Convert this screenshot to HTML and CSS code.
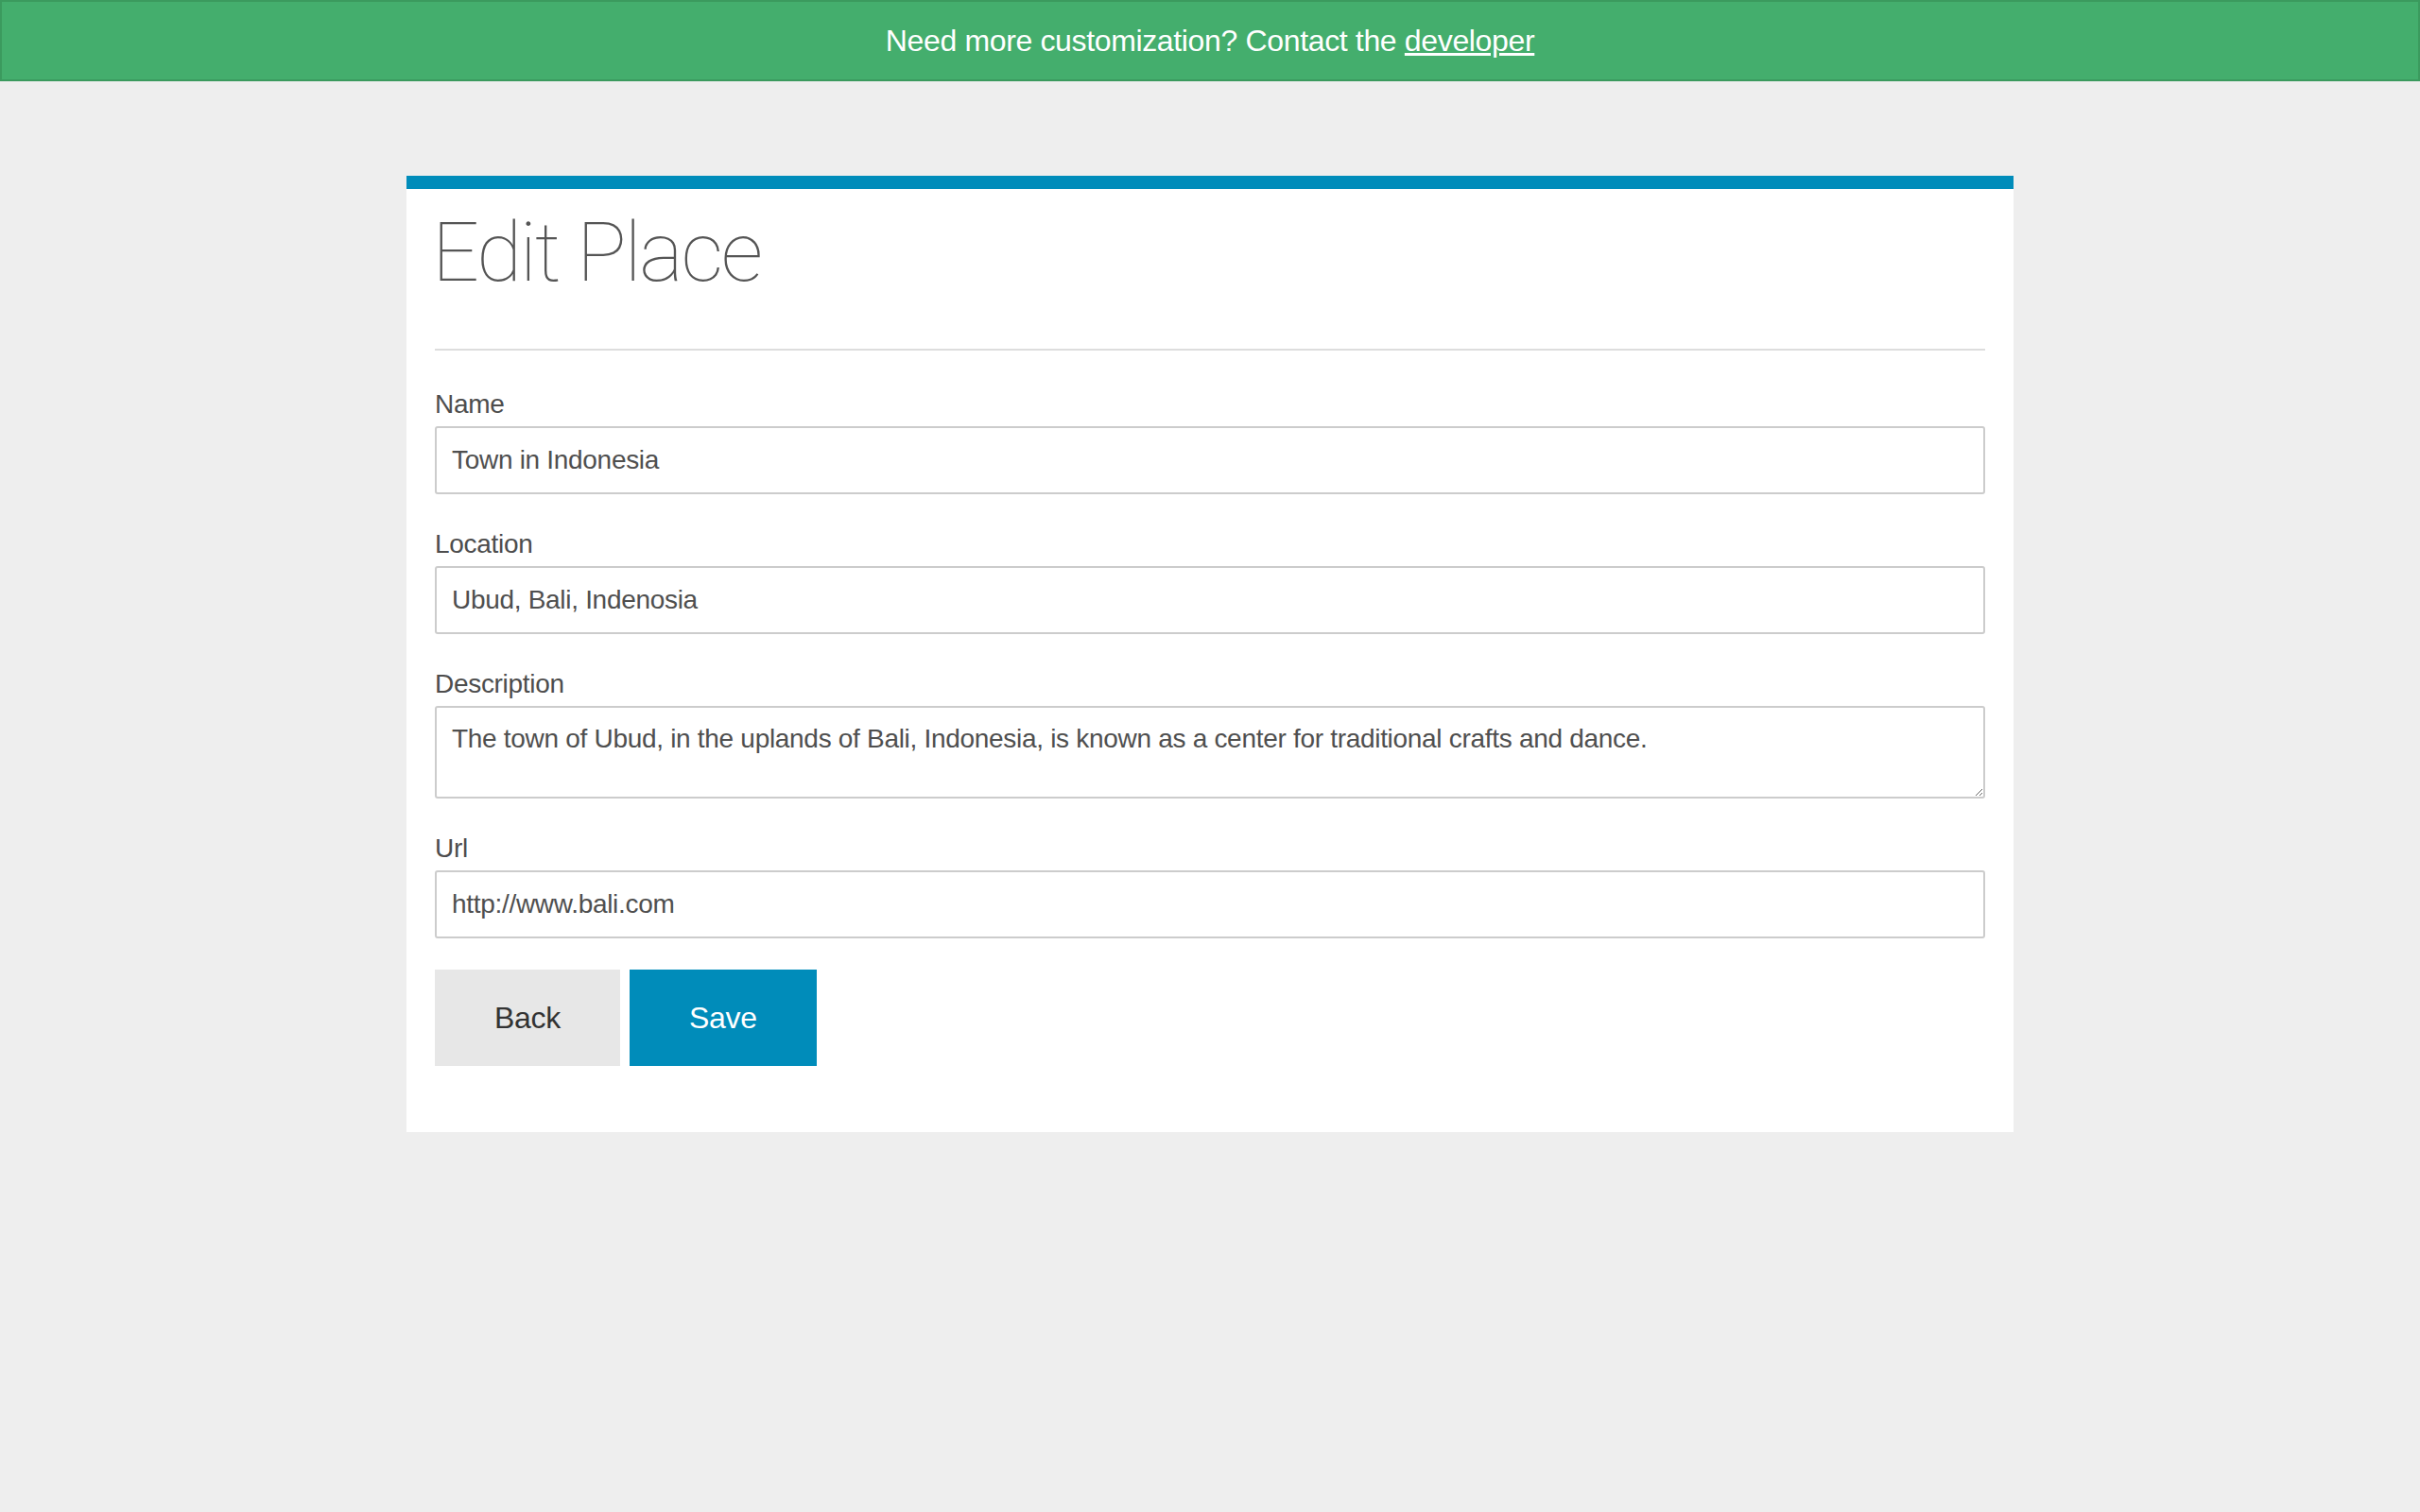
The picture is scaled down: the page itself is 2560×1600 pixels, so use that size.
FILE: index.html
```html
<!DOCTYPE html>
<html lang="en">
<head>
<meta charset="utf-8">
<title>Edit Place</title>
<link rel="stylesheet" href="styles.css">
</head>
<body>
<div class="banner">Need more customization? Contact the <a href="#" class="banner-link">developer</a></div>
<main class="card">
  <h1 class="title">Edit Place</h1>
  <hr class="divider">
  <form class="form">
    <div class="field">
      <label class="label">Name</label>
      <input class="input" type="text" value="Town in Indonesia">
    </div>
    <div class="field">
      <label class="label">Location</label>
      <input class="input" type="text" value="Ubud, Bali, Indenosia">
    </div>
    <div class="field">
      <label class="label">Description</label>
      <textarea class="input textarea">The town of Ubud, in the uplands of Bali, Indonesia, is known as a center for traditional crafts and dance.</textarea>
    </div>
    <div class="field field-last">
      <label class="label">Url</label>
      <input class="input" type="text" value="http://www.bali.com">
    </div>
    <div class="actions">
      <button type="button" class="btn btn-back">Back</button>
      <button type="button" class="btn btn-save">Save</button>
    </div>
  </form>
</main>
</body>
</html>
```
FILE: styles.css
```css
html, body {
  margin: 0;
  padding: 0;
}
body {
  background: #eeeeee;
  font-family: "Liberation Sans", Arial, sans-serif;
  color: #4d4d4d;
  min-height: 1600px;
}
.banner {
  height: 82px;
  line-height: 82px;
  background: #44ae6d;
  border: 2px solid #3b9a5e;
  color: #ffffff;
  font-size: 32px;
  letter-spacing: -0.35px;
  text-align: center;
}
.banner-link {
  color: #ffffff;
  text-decoration: underline;
}
.card {
  width: 1640px;
  margin: 100px 0 0 430px;
  background: #ffffff;
  border-top: 14px solid #008cba;
  padding: 0 30px 70px;
}
.title {
  margin: 23px 0 0 -3px;
  font-family: Roboto, "Liberation Sans", sans-serif;
  font-weight: 100;
  font-size: 88px;
  line-height: 88px;
  color: #555555;
  letter-spacing: -2.3px;
}
.divider {
  margin: 58px 0 0;
  border: 0;
  height: 2px;
  background: #dddddd;
}
.form {
  display: flex;
  flex-direction: column;
  margin-top: 41px;
}
.field {
  display: flex;
  flex-direction: column;
  margin-bottom: 37px;
}
.field-last {
  margin-bottom: 33px;
}
.label {
  font-size: 28px;
  line-height: 32px;
  margin-bottom: 7px;
  color: #4d4d4d;
  letter-spacing: -0.3px;
}
.input {
  box-sizing: border-box;
  height: 72px;
  width: 100%;
  border: 2px solid #cccccc;
  border-radius: 3px;
  padding: 0 16px;
  font-family: "Liberation Sans", Arial, sans-serif;
  font-size: 28px;
  line-height: 32px;
  letter-spacing: -0.3px;
  color: #4f4f4f;
  background: #ffffff;
  outline: none;
  margin: 0;
}
.textarea {
  height: 98px;
  padding: 17px 16px 0;
  resize: vertical;
  display: block;
}
.actions {
  display: flex;
  gap: 10px;
}
.btn {
  height: 102px;
  border: 0;
  padding: 0 63px;
  font-family: "Liberation Sans", Arial, sans-serif;
  font-size: 32px;
  letter-spacing: -0.3px;
  cursor: pointer;
}
.btn-back {
  background: #e7e7e7;
  color: #333333;
}
.btn-save {
  background: #008cba;
  color: #ffffff;
}
```
